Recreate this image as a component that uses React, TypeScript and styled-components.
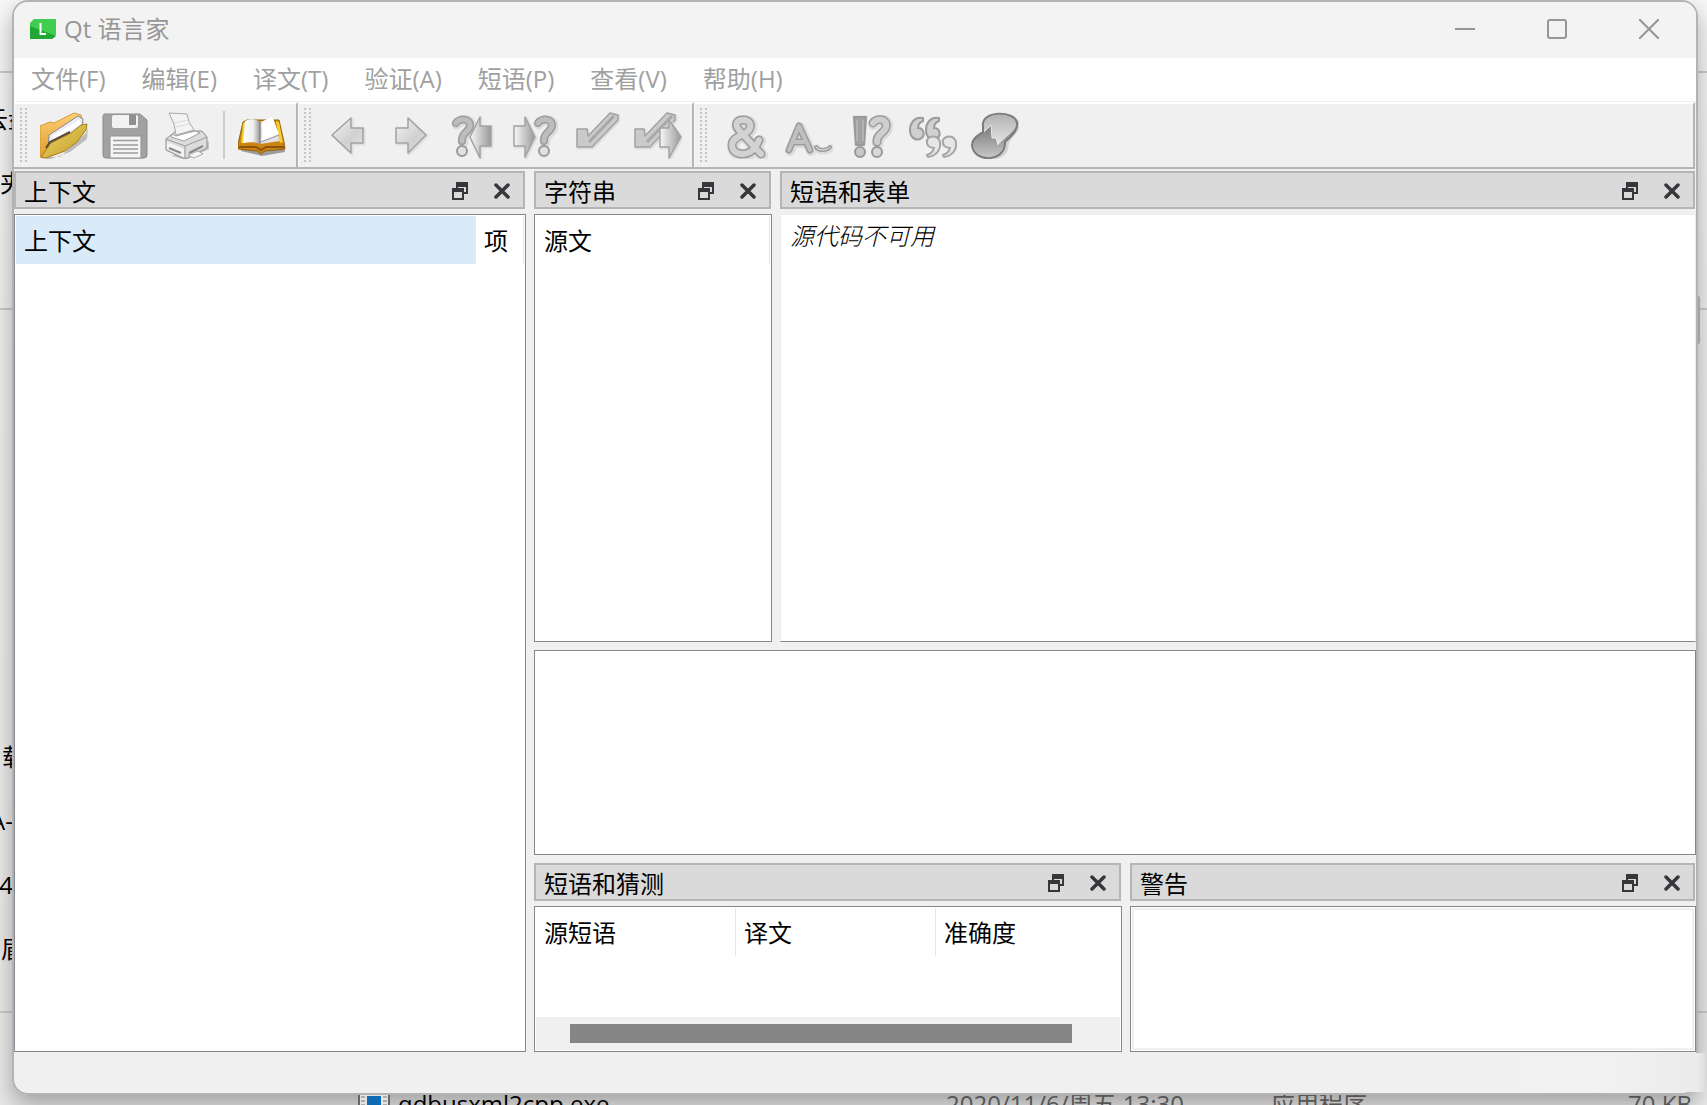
import React from 'react';
import styled, { createGlobalStyle, css } from 'styled-components';

const GlobalStyle = createGlobalStyle`
  *, *::before, *::after { box-sizing: border-box; }
  body {
    margin: 0;
    font-family: 'Open Sans', 'Noto Sans CJK SC', sans-serif;
    font-size: 24px;
    line-height: 32px;
    color: #000;
  }
  button { font: inherit; color: inherit; background: none; border: 0; padding: 0; }
`;

/* ---------- Desktop behind the window ---------- */

const Desktop = styled.div`
  position: relative;
  display: flex;
  min-height: 100vh;
  padding: 0 9px 10px 12px;
  overflow: hidden;
  background: linear-gradient(#f7f7f7, #eeeeee 30%, #e8e8e8);
`;

const Explorer = styled.div`
  position: absolute;
  inset: 0;
`;

const ExplorerNav = styled.ul`
  list-style: none;
  margin: 0;
  padding: 71px 0 0;
  width: 100%;
  line-height: 64px;
`;

const NavGroup = styled.li<{ $space: number; $bottom?: boolean }>`
  height: ${p => p.$space}px;
  border-top: 2px solid #cbcbcb;
  padding: 14px 0 30px;
  display: flex;
  flex-direction: column;
  justify-content: ${p => (p.$bottom ? 'flex-end' : 'flex-start')};
`;

const NavLabel = styled.span<{ $end: number }>`
  width: ${p => p.$end}px;
  height: 64px;
  display: flex;
  justify-content: flex-end;
  white-space: nowrap;
`;

const FileRow = styled.div`
  position: absolute;
  left: 358px;
  right: 15px;
  top: 1088px;
  height: 34px;
  display: grid;
  grid-template-columns: 40px 548px 325px 1fr auto;
  color: #555;
`;

const FileName = styled.span`
  color: #000;
`;

const ScrollThumb = styled.div`
  position: absolute;
  right: 7px;
  top: 296px;
  width: 12px;
  height: 48px;
  border-radius: 2px;
  background: #bdbdbd;
`;

/* ---------- Window frame ---------- */

const Window = styled.main`
  position: relative;
  flex: 1;
  min-width: 0;
  display: flex;
  flex-direction: column;
  border: 2px solid #b3b3b3;
  border-radius: 16px;
  overflow: hidden;
  background: #f0f0f0;
  background-clip: padding-box;
`;

const WindowShadow = styled.div`
  position: absolute;
  inset: 0 9px 10px 12px;
  border-radius: 16px;
  box-shadow: 0 10px 22px rgba(0, 0, 0, 0.3);
`;

const TitleBar = styled.header`
  flex: none;
  display: flex;
  align-items: center;
  height: 56px;
  padding: 0 1px 2px 16px;
  background: #f3f3f3;
  color: #969696;
`;

const WindowTitle = styled.h1`
  flex: 1;
  margin: 0 0 0 8px;
  font-size: 24px;
  font-weight: 400;
`;

const CaptionButton = styled.button`
  width: 92px;
  height: 54px;
  display: grid;
  place-items: center;
`;

const MenuBar = styled.nav`
  flex: none;
  display: flex;
  height: 43px;
  padding-bottom: 2px;
  background: #fff;
  color: #a0a0a0;
`;

const MenuItem = styled.button`
  padding: 0 19px 0 17px;
`;

/* ---------- Tool bars ---------- */

const ToolBars = styled.div`
  flex: none;
  display: flex;
  height: 68px;
  margin: 0 1px 2px 0;
  border-top: 1px solid #f0f0f0;
`;

const ToolBar = styled.div<{ $grow?: boolean }>`
  display: flex;
  align-items: center;
  flex: ${p => (p.$grow ? 1 : 'none')};
  padding: 0 3px 2px 6px;
  border-top: 2px solid #fff;
  border-right: 2px solid #b5b5b5;
  border-bottom: 2px solid #b5b5b5;
  box-shadow: inset 1px 0 #fafafa;
`;

const Grip = styled.div<{ $gap?: number }>`
  width: 7px;
  height: 54px;
  margin-right: ${p => p.$gap ?? 6}px;
  background-image: radial-gradient(circle at 1px 1px, #c4c4c4 1px, transparent 1px);
  background-size: 5px 4px;
`;

const ToolButton = styled.button`
  width: 62px;
  height: 60px;
  display: grid;
  place-items: center;
`;

const ToolSeparator = styled.div`
  width: 2px;
  height: 48px;
  margin: 0 6px 0 4px;
  background: #cdcdcd;
`;

/* ---------- Dock widgets ---------- */

const Workspace = styled.div`
  flex: 1;
  min-height: 0;
  display: grid;
  grid-template-columns: 512px minmax(0, 1fr);
  gap: 8px;
`;

const RightArea = styled.div`
  display: grid;
  grid-template-rows: minmax(0, 1fr) 205px 189px;
  gap: 8px;
`;

const TopDocks = styled.div`
  display: grid;
  grid-template-columns: 238px minmax(0, 1fr);
  gap: 8px;
`;

const BottomDocks = styled.div`
  display: grid;
  grid-template-columns: 588px minmax(0, 1fr);
  gap: 8px;
`;

const Dock = styled.section`
  display: flex;
  flex-direction: column;
  gap: 5px;
  min-width: 0;
  min-height: 0;
`;

const DockHeader = styled.header`
  flex: none;
  display: flex;
  align-items: stretch;
  height: 38px;
  margin-right: 1px;
  padding: 2px 0 0 8px;
  border: 2px solid #b5b5b5;
  background: #dadada;
`;

const DockTitle = styled.h2`
  flex: 1;
  margin: 0;
  padding-top: 1px;
  font-size: 24px;
  font-weight: 400;
`;

const DockButton = styled.button`
  width: 42px;
  display: grid;
  place-items: center;
`;

const Panel = styled.div<{ $soft?: boolean }>`
  flex: 1;
  min-height: 0;
  display: flex;
  flex-direction: column;
  padding: 1px;
  background: #fff;
  border: 1px solid #828790;
  ${p =>
    p.$soft &&
    css`
      border-color: #ececec;
      border-bottom-color: #828790;
    `}
`;

const Table = styled.table`
  width: 100%;
  table-layout: fixed;
  border-collapse: separate;
  border-spacing: 0;
`;

const Th = styled.th<{ $active?: boolean; $last?: boolean; $width?: number }>`
  width: ${p => (p.$width ? `${p.$width}px` : 'auto')};
  height: 48px;
  padding: 1px 0 0 8px;
  text-align: left;
  font-weight: 400;
  white-space: nowrap;
  background: ${p => (p.$active ? '#d9ebf9' : '#fff')};
  border-right: ${p => (p.$active || p.$last ? '0' : '1px solid #e5e5e5')};
`;

const Filler = styled.div`
  flex: 1;
`;

const ScrollTrack = styled.div`
  height: 33px;
  padding: 7px 48px 7px 34px;
  background: #f0f0f0;
`;

const ScrollHandle = styled.div`
  height: 19px;
  background: #858585;
`;

const Unavailable = styled.p`
  margin: 4px 8px;
  font-style: italic;
  font-weight: 300;
`;

const WarningList = styled.div`
  flex: 1;
  border: 2px solid #f0f0f0;
`;

const StatusBar = styled.footer`
  flex: none;
  height: 41px;
`;

const CornerHaze = styled.div`
  position: absolute;
  right: 2px;
  bottom: 13px;
  width: 265px;
  height: 39px;
  background: linear-gradient(90deg, #f0f0f0, #f1f2f1 60%, #ebebeb 97%, #dedede);
`;

/* ---------- Icons ---------- */

const Glyph = ({ children, size = 48 }: { children: React.ReactNode; size?: number }) => (
  <svg width={size} height={size} viewBox={`0 0 ${size} ${size}`} fill="none" aria-hidden="true">
    {children}
  </svg>
);

/* A rounded line with a dark rim, used by the embossed grey icons. */
const Embossed = ({ d, width = 8, fill = '#c4c4c4' }: { d: string; width?: number; fill?: string }) => (
  <>
    <path d={d} stroke="#dcdcdc" strokeWidth={width + 3} strokeLinecap="round" strokeLinejoin="round" transform="translate(1 1)" />
    <path d={d} stroke="#9c9c9c" strokeWidth={width} strokeLinecap="round" strokeLinejoin="round" />
    <path d={d} stroke={fill} strokeWidth={width - 3} strokeLinecap="round" strokeLinejoin="round" />
  </>
);

const Gradients = () => (
  <svg width="0" height="0" style={{ position: 'absolute' }} aria-hidden="true">
    <defs>
      <linearGradient id="lightLeft"><stop stopColor="#f8f8f8" /><stop offset="1" stopColor="#999" /></linearGradient>
      <linearGradient id="arrow" x1="0" x2="1" y1="0" y2="1"><stop stopColor="#f2f2f2" /><stop offset=".6" stopColor="#d0d0d0" /><stop offset="1" stopColor="#e6e6e6" /></linearGradient>
      <linearGradient id="gold" x1="0" x2="1" y1="0" y2="1"><stop stopColor="#ecd964" /><stop offset="1" stopColor="#c39a2c" /></linearGradient>
      <linearGradient id="orange" x1="0" x2="0" y1="0" y2="1"><stop stopColor="#ffd077" /><stop offset="1" stopColor="#e09a28" /></linearGradient>
      <linearGradient id="page"><stop stopColor="#fff" /><stop offset=".6" stopColor="#efefef" /><stop offset="1" stopColor="#9a9a9a" /></linearGradient>
      <linearGradient id="blobTop" x1="0" x2="0" y1="0" y2="1"><stop stopColor="#b2b2b2" /><stop offset="1" stopColor="#e6e6e6" /></linearGradient>
      <linearGradient id="blobBottom" x1="0" x2="0" y1="0" y2="1"><stop stopColor="#8c8c8c" /><stop offset=".4" stopColor="#888" /><stop offset="1" stopColor="#c8c8c8" /></linearGradient>
    </defs>
  </svg>
);

const LinguistLogo = () => (
  <svg width="26" height="20" viewBox="0 0 26 20" aria-hidden="true">
    <path d="M4 0H26V16L22 20H0V4Z" fill="#41cd52" />
    <path d="M0 7L26 17L22 20H0Z" fill="#21a634" />
    <path d="M10.500 4V15H16" stroke="#fff" strokeWidth="2" fill="none" />
  </svg>
);

const FolderIcon = () => (
  <Glyph>
    <path d="M4 46L20 46L46 22L48 17L47 28L30 41L8 49Z" fill="#bcbcbc" />
    <path d="M0 15L10 11L14 12L34 2L41 4L43 12L12 44L4 47L0 46Z" fill="url(#orange)" stroke="#d09a3c" />
    <path d="M9 24L38 5L43 8L42 17L20 31L8 38Z" fill="#e7ecf5" stroke="#888" />
    <path d="M12 25L39 9L41 13L15 29Z" fill="#fff" />
    <path d="M1 46L11 32L31 22L41 14L47 13L46 19L37 31L25 40L6 47Z" fill="url(#gold)" stroke="#a57d20" />
    <path d="M6 37L10 31L30 21" stroke="#5a4a30" strokeWidth="2" />
  </Glyph>
);

const FloppyIcon = () => (
  <Glyph>
    <path d="M3 3H38L45 9V44Q45 47 42 47H4Q1 47 1 44V5Q1 3 3 3Z" fill="#a2a2a2" stroke="#8a8a8a" />
    <rect x="10" y="4" width="26" height="13" rx="2" fill="#f2f2f2" />
    <rect x="27" y="4" width="7" height="10" fill="#8f8f8f" />
    <rect x="8" y="25" width="31" height="22" fill="#f4f4f4" stroke="#8f8f8f" />
    <path d="M11 29.500H36M11 34H36M11 38H36M11 42H36" stroke="#9a9a9a" strokeWidth="1.500" />
  </Glyph>
);

const PrinterIcon = () => (
  <Glyph>
    <path d="M8 45L22 49L45 38V30L20 36Z" fill="#c4c4c4" />
    <path d="M2 28L12 20L38 20L43 26L43 37L21 48L2 39Z" fill="#dcdcdc" stroke="#8e8e8e" />
    <path d="M5 2L23 3L25 11L30 19L12 24L10 13Z" fill="#f3f3f3" stroke="#aaa" />
    <path d="M11 16L26 13M10 12L24 9" stroke="#dedede" />
    <path d="M8 23L12 25L31 20L36 22L20 30L7 26Z" fill="#fff" stroke="#a0a0a0" />
    <path d="M2 28L21 35L43 26M21 35V48" stroke="#9a9a9a" />
    <path d="M3 31L20 38L20 46L3 38Z" fill="#f5f5f5" />
    <path d="M5 37L17 42M25 42L39 35" stroke="#888" strokeWidth="2" />
    <path d="M24 44L34 40L39 43L30 47Z" fill="#f6f6f6" stroke="#aaa" />
  </Glyph>
);

const BookIcon = () => (
  <Glyph>
    <path d="M3 40L24 45L47 41L46 35L4 36Z" fill="#9c9c9c" />
    <path d="M5 11L9 9L41 9L46 31L47 38L27 40L23 43L19 40L0 38V33Z" fill="#cb8412" stroke="#93600c" />
    <path d="M5 12L3 32L8 32V11ZM38 10L42 32L45 31L41 11Z" fill="#f6d12c" />
    <path d="M7 10C13 7 18 8 22 11V33C17 31 12 31 5 32Z" fill="url(#page)" />
    <path d="M22 11L28 9L34 4L42 30L22 33Z" fill="#e2e2e2" />
    <path d="M23 30C26 24 23 14 24 11L34 5L41 23Z" fill="#fff" />
    <path d="M23 31L41 24" stroke="#9a9a9a" />
    <path d="M22 11V33" stroke="#888" strokeWidth="1.500" />
    <path d="M1 36H18L23 39L28 36H46" stroke="#8b5306" strokeWidth="2" />
  </Glyph>
);

const Arrow = ({ d, fill = 'url(#arrow)' }: { d: string; fill?: string }) => (
  <>
    <path d={d} stroke="#dedede" strokeWidth="3" transform="translate(1 1)" strokeLinejoin="round" />
    <path d={d} fill={fill} stroke="#a2a2a2" strokeWidth="1.500" strokeLinejoin="round" />
  </>
);

const BackIcon = () => <Glyph><Arrow d="M8 24L27 7V17H39V32H27V42Z" /></Glyph>;
const ForwardIcon = () => <Glyph><Arrow d="M40 24L22 7V17H10V32H22V42Z" /></Glyph>;

const QuestionMark = () => (
  <>
    <Embossed d="M8 12C11 7 23 7 22 15C21 21 13 22 14 30" fill="#bdbdbd" />
    <circle cx="14" cy="40" r="5" fill="#e2e2e2" stroke="#999" strokeWidth="2" />
  </>
);

const PrevUnfinishedIcon = () => (
  <Glyph>
    <QuestionMark />
    <Arrow d="M22 26L32 6V15H43V35H32V47Z" fill="url(#lightLeft)" />
  </Glyph>
);

const NextUnfinishedIcon = () => (
  <Glyph>
    <Arrow d="M4 15H15V6L25 26L15 46V35H4Z" fill="url(#lightLeft)" />
    <g transform="translate(20 0)"><QuestionMark /></g>
  </Glyph>
);

const DoneIcon = () => (
  <Glyph>
    <Arrow d="M5 18H15L16 25L38 2L46 4V9L20 36H5Z" fill="#cacaca" />
    <path d="M17 31L42 5" stroke="#a8a8a8" strokeWidth="3" />
  </Glyph>
);

const DoneNextIcon = () => (
  <Glyph>
    <Arrow d="M1 18H10L11 25L33 2L41 4V9L16 36H1Z" fill="#cacaca" />
    <path d="M13 31L38 5" stroke="#a8a8a8" strokeWidth="3" />
    <Arrow d="M26 17H35V9L47 26L35 47V36H26Z" fill="url(#lightLeft)" />
  </Glyph>
);

const AcceleratorIcon = () => (
  <Glyph>
    <Embossed d="M38 43L16 19C11 13 14 9 20 9C27 9 29 14 26 19C23 24 9 25 9 34C9 43 20 45 27 41C32 38 34 34 36 29" width={9} fill="#d2d2d2" />
  </Glyph>
);

const WhitespaceIcon = () => (
  <Glyph>
    <Embossed d="M4 39L14 15L25 39M9 31H20" width={7} fill="#c0c0c0" />
    <Embossed d="M31 36C33 40 42 40 45 36" width={4} fill="#f0f0f0" />
  </Glyph>
);

const PunctuationIcon = () => (
  <Glyph>
    <path d="M7 6H19L17 34H9Z" stroke="#dcdcdc" strokeWidth="3" strokeLinejoin="round" />
    <path d="M7 6H19L17 34H9Z" fill="#a2a2a2" stroke="#999" strokeWidth="2" strokeLinejoin="round" />
    <path d="M10 9V30M16 9V30" stroke="#c6c6c6" />
    <circle cx="13" cy="41" r="5" fill="#c8c8c8" stroke="#999" strokeWidth="2" />
    <Embossed d="M26 12C29 7 41 7 39 16C38 22 29 23 30 31" width={9} fill="#cfcfcf" />
    <circle cx="30" cy="41" r="5" fill="#d8d8d8" stroke="#999" strokeWidth="2" />
  </Glyph>
);

const openQuote = 'M14 7C5 5 1 13 1 19C1 26 6 30 11 28C17 25 15 17 9 17C9 13 11 11 14 10Z';
const closeQuote = 'M19 46C28 45 32 38 31 31C29 24 21 24 18 29C17 34 20 37 25 37C24 41 21 43 18 44Z';

const PhraseIcon = () => (
  <Glyph>
    <g fill="#d0d0d0" stroke="#9c9c9c" strokeWidth="2">
      <path d={openQuote} />
      <path d={openQuote} transform="translate(16 0)" />
    </g>
    <g fill="#e6e6e6" stroke="#a6a6a6" strokeWidth="2">
      <path d={closeQuote} />
      <path d={closeQuote} transform="translate(16 0)" />
    </g>
  </Glyph>
);

const PlaceMarkerIcon = () => (
  <Glyph>
    <path d="M12 12C14 2 42 -1 46 11C48 20 35 25 35 34C35 50 2 50 1 34C1 27 8 23 12 20Z" stroke="#d2d2d2" strokeWidth="3" transform="translate(1 1)" />
    <path d="M12 16C9 -1 44 -1 46 12C47 20 40 25 34 31C35 52 2 52 1 34C1 27 8 24 12 21Z" fill="url(#blobBottom)" stroke="#7c7c7c" strokeWidth="2" />
    <path d="M13 16C10 0 43 0 45 12C46 20 36 24 27 34L25 27H21L20 14L13 21Z" fill="url(#blobTop)" />
    <path d="M13 21L20 14L21 27H25L27 34" stroke="#e8e8e8" />
  </Glyph>
);

const FloatIcon = () => (
  <svg width="16" height="18" viewBox="0 0 16 18" aria-hidden="true">
    <path d="M4 0H16V12H11V10H14V5H6V7H4Z" fill="#35373a" />
    <path d="M0 6H12V18H0ZM2 10V16H10V10Z" fill="#35373a" fillRule="evenodd" />
  </svg>
);

const CloseIcon = () => (
  <svg width="16" height="16" viewBox="0 0 16 16" aria-hidden="true">
    <path d="M2 2L14 14M14 2L2 14" stroke="#35373a" strokeWidth="3.500" strokeLinecap="round" />
  </svg>
);

/* ---------- Composition ---------- */

const DockBar = ({ title }: { title: string }) => (
  <DockHeader>
    <DockTitle>{title}</DockTitle>
    <DockButton aria-label="浮动"><FloatIcon /></DockButton>
    <DockButton aria-label="关闭"><CloseIcon /></DockButton>
  </DockHeader>
);

const menus = ['文件(F)', '编辑(E)', '译文(T)', '验证(A)', '短语(P)', '查看(V)', '帮助(H)'];

const navigationTools = [
  ['上一个', BackIcon],
  ['下一个', ForwardIcon],
  ['上一个未完成', PrevUnfinishedIcon],
  ['下一个未完成', NextUnfinishedIcon],
  ['完成', DoneIcon],
  ['完成并继续', DoneNextIcon],
] as const;

const validationTools = [
  ['快捷键', AcceleratorIcon],
  ['空白', WhitespaceIcon],
  ['标点', PunctuationIcon],
  ['短语匹配', PhraseIcon],
  ['占位符', PlaceMarkerIcon],
] as const;

export default function App() {
  return (
    <>
      <GlobalStyle />
      <Gradients />
      <Desktop>
        <Explorer>
          <ExplorerNav>
            <NavGroup $space={237}>
              <NavLabel $end={32}>云盘</NavLabel>
              <NavLabel $end={24}>夹</NavLabel>
            </NavGroup>
            <NavGroup $space={703} $bottom>
              <NavLabel $end={26}>载</NavLabel>
              <NavLabel $end={13}>A-</NavLabel>
              <NavLabel $end={13}>4</NavLabel>
              <NavLabel $end={25}>眉</NavLabel>
            </NavGroup>
            <NavGroup $space={60} />
          </ExplorerNav>
        </Explorer>
        <ScrollThumb />
        <WindowShadow />
        <FileRow>
          <svg width="32" height="28" viewBox="0 0 32 28" aria-hidden="true">
            <path d="M1 5H31V28H1Z" fill="#e4e4e4" stroke="#666" strokeWidth="2" />
            <path d="M9 8H23V28H9Z" fill="#0f6cb4" />
            <path d="M3 9H7M3 13H7M3 17H7M25 9H29M25 13H29M25 17H29" stroke="#777" />
          </svg>
          <FileName>qdbusxml2cpp.exe</FileName>
          <span>2020/11/6/周五 13:30</span>
          <span>应用程序</span>
          <span>70 KB</span>
        </FileRow>
        <Window>
          <TitleBar>
            <LinguistLogo />
            <WindowTitle>Qt 语言家</WindowTitle>
            <CaptionButton aria-label="最小化">
              <svg width="20" height="20" viewBox="0 0 20 20"><path d="M0 10H20" stroke="#969696" strokeWidth="2" /></svg>
            </CaptionButton>
            <CaptionButton aria-label="最大化">
              <svg width="20" height="20" viewBox="0 0 20 20"><rect x="1" y="1" width="18" height="18" rx="2" fill="none" stroke="#969696" strokeWidth="2" /></svg>
            </CaptionButton>
            <CaptionButton aria-label="关闭窗口">
              <svg width="20" height="20" viewBox="0 0 20 20"><path d="M0 0L20 20M20 0L0 20" stroke="#969696" strokeWidth="2" /></svg>
            </CaptionButton>
          </TitleBar>
          <MenuBar>
            {menus.map(m => <MenuItem key={m}>{m}</MenuItem>)}
          </MenuBar>
          <ToolBars>
            <ToolBar>
              <Grip />
              <ToolButton aria-label="打开"><FolderIcon /></ToolButton>
              <ToolButton aria-label="保存"><FloppyIcon /></ToolButton>
              <ToolButton aria-label="打印"><PrinterIcon /></ToolButton>
              <ToolSeparator />
              <ToolButton aria-label="打开短语书"><BookIcon /></ToolButton>
            </ToolBar>
            <ToolBar>
              <Grip />
              {navigationTools.map(([label, Icon]) => (
                <ToolButton key={label} aria-label={label}><Icon /></ToolButton>
              ))}
            </ToolBar>
            <ToolBar $grow>
              <Grip $gap={9} />
              {validationTools.map(([label, Icon]) => (
                <ToolButton key={label} aria-label={label}><Icon /></ToolButton>
              ))}
            </ToolBar>
          </ToolBars>
          <Workspace>
            <Dock>
              <DockBar title="上下文" />
              <Panel>
                <Table>
                  <thead><tr><Th $active>上下文</Th><Th $width={48}>项</Th></tr></thead>
                </Table>
              </Panel>
            </Dock>
            <RightArea>
              <TopDocks>
                <Dock>
                  <DockBar title="字符串" />
                  <Panel>
                    <Table>
                      <thead><tr><Th>源文</Th></tr></thead>
                    </Table>
                  </Panel>
                </Dock>
                <Dock>
                  <DockBar title="短语和表单" />
                  <Panel $soft>
                    <Unavailable>源代码不可用</Unavailable>
                  </Panel>
                </Dock>
              </TopDocks>
              <Panel />
              <BottomDocks>
                <Dock>
                  <DockBar title="短语和猜测" />
                  <Panel>
                    <Table>
                      <thead>
                        <tr><Th $width={200}>源短语</Th><Th $width={200}>译文</Th><Th $last>准确度</Th></tr>
                      </thead>
                    </Table>
                    <Filler />
                    <ScrollTrack><ScrollHandle /></ScrollTrack>
                  </Panel>
                </Dock>
                <Dock>
                  <DockBar title="警告" />
                  <Panel><WarningList /></Panel>
                </Dock>
              </BottomDocks>
            </RightArea>
          </Workspace>
          <StatusBar />
        </Window>
        <CornerHaze />
      </Desktop>
    </>
  );
}
